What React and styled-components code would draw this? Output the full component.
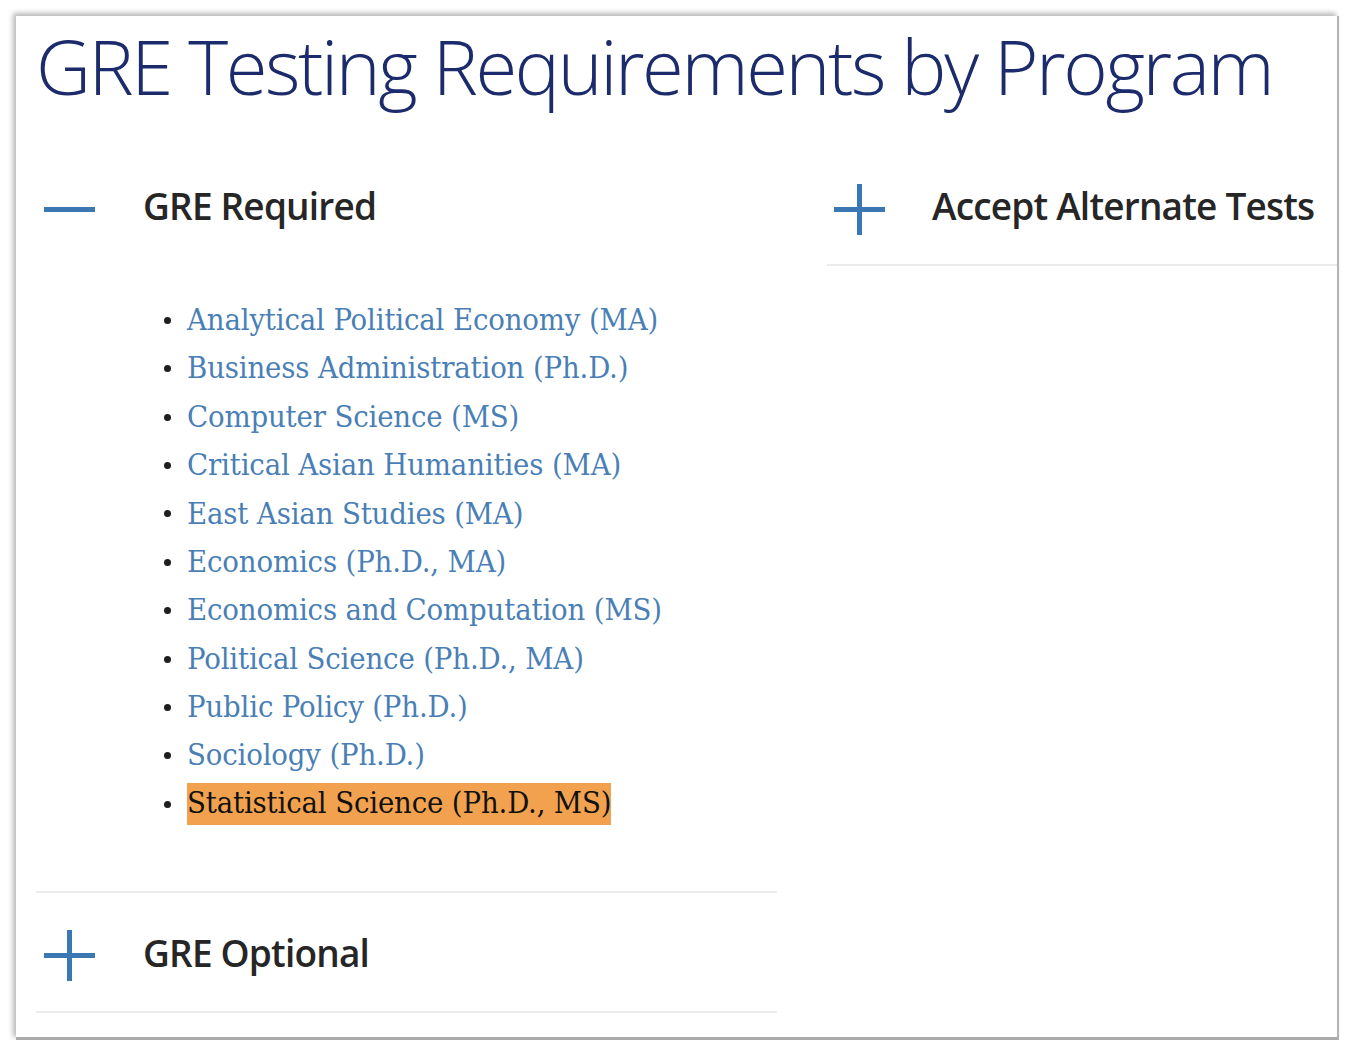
import React from "react";
import styled, { createGlobalStyle } from "styled-components";

const Global = createGlobalStyle`
  html, body { margin: 0; padding: 0; background: #ffffff; }
  body { font-family: "Open Sans", "Liberation Sans", sans-serif; overflow: hidden; }
`;

const Frame = styled.div`
  box-sizing: border-box;
  margin: 16px 0 0 16px;
  width: 1323px;
  height: 1024px;
  background: #ffffff;
  border-right: 2px solid #b3b3b3;
  border-bottom: 3px solid #ababab;
  box-shadow: -3px -3px 5px rgba(0, 0, 0, 0.28);
  padding: 4px 0 0 20px;
`;

const Title = styled.h1`
  margin: 0;
  font-family: "Open Sans", "Liberation Sans", sans-serif;
  font-weight: 300;
  font-size: 76px;
  letter-spacing: -2.4px;
  line-height: 1.2;
  color: #1b2b6b;
  white-space: nowrap;
`;

const Columns = styled.div`
  display: grid;
  grid-template-columns: 741px 510px;
  column-gap: 50px;
  align-items: start;
  margin-top: 35px;
`;

const Column = styled.div`
  display: flex;
  flex-direction: column;
`;

const Item = styled.section`
  border-top: ${(p) => (p.$top ? "2px solid #ebebeb" : "none")};
  border-bottom: ${(p) => (p.$bottom ? "2px solid #ebebeb" : "none")};
`;

const Header = styled.button`
  display: flex;
  align-items: center;
  width: 100%;
  height: 118px;
  padding: 0 0 0 ${(p) => p.$indent}px;
  border: 0;
  background: transparent;
  cursor: pointer;
  text-align: left;
`;

const IconBox = styled.span`
  display: flex;
  width: 51px;
  height: 51px;
  margin-top: ${(p) => p.$drop || 8}px;
  flex: none;
`;

const HeaderText = styled.span`
  margin-left: ${(p) => p.$gap}px;
  font-family: "Open Sans", "Liberation Sans", sans-serif;
  font-weight: 600;
  font-size: 37px;
  letter-spacing: -0.8px;
  color: #262626;
  white-space: nowrap;
`;

const List = styled.ul`
  list-style: none;
  margin: 32px 0 63px 0;
  padding: 0 0 0 128px;
`;

const Entry = styled.li`
  display: flex;
  align-items: center;
  height: 48.4px;
  &::before {
    content: "";
    flex: none;
    width: 7px;
    height: 7px;
    border-radius: 50%;
    background: #1e1e1e;
    margin-right: 16px;
  }
`;

const Link = styled.a`
  font-family: "DejaVu Serif Condensed", "DejaVu Serif", serif;
  font-stretch: condensed;
  font-size: 30.7px;
  letter-spacing: -0.15px;
  line-height: 1.2;
  padding: ${(p) => (p.$hl ? "2px 0 3px" : "0")};
  color: ${(p) => (p.$hl ? "#111111" : "#4a7fb6")};
  background: ${(p) => (p.$hl ? "#f2a24f" : "transparent")};
  text-decoration: none;
  white-space: nowrap;
`;

const Minus = () => (
  <svg width="51" height="51" viewBox="0 0 51 51">
    <rect x="0" y="23" width="51" height="5" fill="#3b77b3" />
  </svg>
);

const Plus = () => (
  <svg width="51" height="51" viewBox="0 0 51 51">
    <rect x="0" y="23" width="51" height="5" fill="#3b77b3" />
    <rect x="23" y="0" width="5" height="51" fill="#3b77b3" />
  </svg>
);

const programs = [
  "Analytical Political Economy (MA)",
  "Business Administration (Ph.D.)",
  "Computer Science (MS)",
  "Critical Asian Humanities (MA)",
  "East Asian Studies (MA)",
  "Economics (Ph.D., MA)",
  "Economics and Computation (MS)",
  "Political Science (Ph.D., MA)",
  "Public Policy (Ph.D.)",
  "Sociology (Ph.D.)",
];

export default function App() {
  return (
    <>
      <Global />
      <Frame>
        <Title>GRE Testing Requirements by Program</Title>
        <Columns>
          <Column>
            <Item>
              <Header $indent={8}>
                <IconBox>
                  <Minus />
                </IconBox>
                <HeaderText $gap={48}>GRE Required</HeaderText>
              </Header>
              <List>
                {programs.map((p) => (
                  <Entry key={p}>
                    <Link href="#">{p}</Link>
                  </Entry>
                ))}
                <Entry>
                  <Link $hl>Statistical Science (Ph.D., MS)</Link>
                </Entry>
              </List>
            </Item>
            <Item $top $bottom>
              <Header $indent={8}>
                <IconBox $drop={6}>
                  <Plus />
                </IconBox>
                <HeaderText $gap={48}>GRE Optional</HeaderText>
              </Header>
            </Item>
          </Column>
          <Column>
            <Item $bottom>
              <Header $indent={7}>
                <IconBox>
                  <Plus />
                </IconBox>
                <HeaderText $gap={47}>Accept Alternate Tests</HeaderText>
              </Header>
            </Item>
          </Column>
        </Columns>
      </Frame>
    </>
  );
}
